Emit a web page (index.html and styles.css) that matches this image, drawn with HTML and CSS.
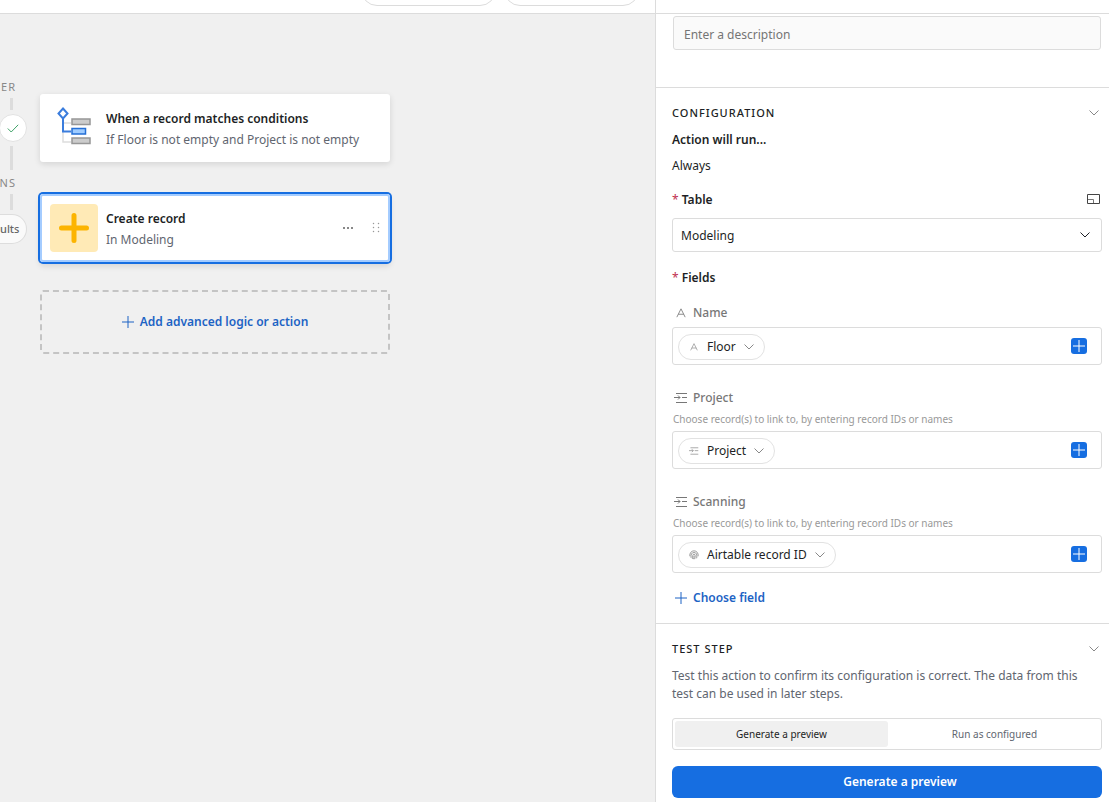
FILE: index.html
```html
<!DOCTYPE html>
<html lang="en">
<head>
    <meta charset="UTF-8">
    <meta name="viewport" content="width=device-width, initial-scale=1.0">
    <title>Automation Editor</title>
    <link rel="stylesheet" href="styles.css">
</head>
<body>
    <!-- Shared icons -->
    <svg class="sprite" aria-hidden="true">
        <symbol id="chevron" viewBox="0 0 10 6"><path d="M.5 .5 5 5 9.500 .5"/></symbol>
        <symbol id="plus" viewBox="0 0 12 12"><path d="M6 0v12M0 6h12"/></symbol>
        <symbol id="text" viewBox="0 0 12 12"><path d="M1 11 6 1l5 10M2.700 7.500h6.600"/></symbol>
        <symbol id="link" viewBox="0 0 14 10"><path d="M2 .5h11M8 4.500h5M2 9.500h11M0 4.500h6M4 2.500l2 2-2 2"/></symbol>
        <symbol id="print" viewBox="0 0 12 12"><path d="M1 7.500C.5 3.500 3 1 6 1s5.500 2.500 5 6.500M2.500 9.500C2 5.500 3 3 6 3s4 2.500 3.200 7M4 10.700C4.700 8 4 5 6 5s1.500 3 .8 6M6 7c0 1.500 0 2.500-.6 4"/></symbol>
    </svg>

    <div class="app">
        <main class="workspace">
            <header class="topbar">
                <button class="top-button" aria-label="Previous"></button>
                <button class="top-button" aria-label="Next"></button>
            </header>
            <div class="canvas">
                <div class="rail">
                    <span class="rail-label">ER</span>
                    <span class="line"></span>
                    <span class="check">
                        <svg width="12" height="9" viewBox="0 0 12 9"><path d="M.8 4.500 4.200 8 11.200 .8"/></svg>
                    </span>
                    <span class="line line-long"></span>
                    <span class="rail-label">NS</span>
                    <span class="line line-end"></span>
                    <button class="results">ults</button>
                </div>
                <div class="steps">
                    <section class="card">
                        <div class="card-icon">
                            <svg width="48" height="48" viewBox="0 0 48 48" fill="none">
                                <path d="M13 17.500v20.500h8M13 19h8" stroke="#ddd" stroke-width="1.500"/>
                                <path d="M13 13v14.500h8" stroke="#3b7ddd" stroke-width="2"/>
                                <path d="M13 4.500 17.500 9.500 13 14.500 8.500 9.500z" fill="#fff" stroke="#3b7ddd" stroke-width="2"/>
                                <path d="M22 15h18v5.500H22zM22 34h18v5.500H22z" fill="#ccc" stroke="#979797" stroke-width="1.500"/>
                                <path d="M22 24.500h13.500V30H22z" fill="#9fccff" stroke="#246fd6" stroke-width="1.500"/>
                            </svg>
                        </div>
                        <div class="card-text">
                            <h2>When a record matches conditions</h2>
                            <p>If Floor is not empty and Project is not empty</p>
                        </div>
                    </section>
                    <section class="card selected">
                        <div class="card-icon yellow">
                            <svg width="30" height="30" viewBox="0 0 30 30"><path d="M15 2.500v25M2.500 15h25" stroke="#fcb400" stroke-width="5" stroke-linecap="round"/></svg>
                        </div>
                        <div class="card-text">
                            <h2>Create record</h2>
                            <p>In Modeling</p>
                        </div>
                        <button class="icon-button" aria-label="More options">
                            <svg width="12" height="4" viewBox="0 0 12 4" fill="#888"><rect x="1" y="1" width="2" height="2"/><rect x="5" y="1" width="2" height="2"/><rect x="9" y="1" width="2" height="2"/></svg>
                        </button>
                        <button class="icon-button" aria-label="Drag to reorder">
                            <svg width="8" height="12" viewBox="0 0 8 12" fill="#999"><path d="M1 1h1v1H1zM6 1h1v1H6zM1 5h1v1H1zM6 5h1v1H6zM1 9h1v1H1zM6 9h1v1H6z" stroke="#999" stroke-width=".3"/></svg>
                        </button>
                    </section>
                    <button class="add-step">
                        <svg class="icon" width="12" height="12"><use href="#plus"/></svg>
                        Add advanced logic or action
                    </button>
                </div>
            </div>
        </main>

        <aside class="panel">
            <div class="panel-top"></div>
            <div class="description">
                <input type="text" placeholder="Enter a description" aria-label="Description">
            </div>

            <section class="section">
                <div class="section-title">
                    <h3>Configuration</h3>
                    <button class="collapse" aria-label="Collapse configuration"><svg class="icon" width="10" height="6"><use href="#chevron"/></svg></button>
                </div>
                <p class="strong">Action will run...</p>
                <p class="condition">Always</p>
                <div class="label-row">
                    <label class="strong" for="table"><span class="required">*</span> Table</label>
                    <button class="expand" aria-label="Expand table">
                        <svg width="13" height="10" viewBox="0 0 13 10" fill="none"><path d="M.5 .5h12v9H.5z" stroke="#444"/><path d="M1 5.500h5.500V9" stroke="#777"/></svg>
                    </button>
                </div>
                <div class="select">
                    <select id="table">
                        <option>Modeling</option>
                    </select>
                    <svg class="icon" width="10" height="6"><use href="#chevron"/></svg>
                </div>
                <p class="strong fields-title"><span class="required">*</span> Fields</p>

                <div class="field">
                    <div class="field-name"><svg class="icon" width="14" height="10"><use href="#text"/></svg>Name</div>
                    <div class="token-box">
                        <button class="token">
                            <svg class="icon" width="10" height="8"><use href="#text"/></svg>
                            Floor
                            <svg class="icon" width="10" height="6"><use href="#chevron"/></svg>
                        </button>
                        <button class="insert" aria-label="Insert value in Name"><svg class="icon" width="12" height="12"><use href="#plus"/></svg></button>
                    </div>
                </div>
                <div class="field">
                    <div class="field-name"><svg class="icon" width="14" height="10"><use href="#link"/></svg>Project</div>
                    <p class="hint">Choose record(s) to link to, by entering record IDs or names</p>
                    <div class="token-box">
                        <button class="token">
                            <svg class="icon" width="10" height="8"><use href="#link"/></svg>
                            Project
                            <svg class="icon" width="10" height="6"><use href="#chevron"/></svg>
                        </button>
                        <button class="insert" aria-label="Insert value in Project"><svg class="icon" width="12" height="12"><use href="#plus"/></svg></button>
                    </div>
                </div>
                <div class="field">
                    <div class="field-name"><svg class="icon" width="14" height="10"><use href="#link"/></svg>Scanning</div>
                    <p class="hint">Choose record(s) to link to, by entering record IDs or names</p>
                    <div class="token-box">
                        <button class="token">
                            <svg class="icon" width="10" height="10"><use href="#print"/></svg>
                            Airtable record ID
                            <svg class="icon" width="10" height="6"><use href="#chevron"/></svg>
                        </button>
                        <button class="insert" aria-label="Insert value in Scanning"><svg class="icon" width="12" height="12"><use href="#plus"/></svg></button>
                    </div>
                </div>
                <button class="choose-field"><svg class="icon" width="12" height="12"><use href="#plus"/></svg>Choose field</button>
            </section>

            <section class="section">
                <div class="section-title">
                    <h3>Test step</h3>
                    <button class="collapse" aria-label="Collapse test step"><svg class="icon" width="10" height="6"><use href="#chevron"/></svg></button>
                </div>
                <p class="muted">Test this action to confirm its configuration is correct. The data from this test can be used in later steps.</p>
                <div class="segments">
                    <button class="active">Generate a preview</button>
                    <button>Run as configured</button>
                </div>
                <button class="primary">Generate a preview</button>
            </section>
        </aside>
    </div>
</body>
</html>
```

FILE: styles.css
```css
* {
    box-sizing: border-box;
}
body {
    margin: 0;
    font-family: "Noto Sans", "Open Sans", sans-serif;
    font-size: 12px;
    line-height: 18px;
    color: #1d1f25;
    background: #fff;
}
h2, h3, p {
    margin: 0;
    font-size: 12px;
}
button, input, select {
    font: inherit;
    color: inherit;
}
button {
    padding: 0;
    border: none;
    background: none;
    cursor: pointer;
}
svg {
    display: block;
    flex: none;
}
.sprite {
    position: absolute;
    width: 0;
    height: 0;
}
.icon {
    fill: none;
    stroke: currentColor;
}
.app {
    display: flex;
    height: 100vh;
    overflow: hidden;
}

/* Workspace */
.workspace {
    flex: 1;
    min-width: 0;
    display: flex;
    flex-direction: column;
}
.topbar {
    display: flex;
    align-items: flex-end;
    justify-content: flex-end;
    gap: 8px;
    height: 14px;
    padding: 0 16px 7px 0;
    border-bottom: 1px solid #dcdcdc;
    overflow: hidden;
}
.top-button {
    flex: none;
    width: 135px;
    height: 32px;
    border: 1px solid #dcdcdc;
    border-radius: 16px;
}
.canvas {
    flex: 1;
    display: flex;
    gap: 12px;
    background: #f0f0f0;
}
.rail {
    display: flex;
    flex-direction: column;
    align-items: flex-end;
    width: 28px;
    padding-top: 64px;
}
.rail-label {
    padding-right: 12px;
    font-size: 11px;
    letter-spacing: 1px;
    color: #888;
}
.line {
    width: 3px;
    height: 12px;
    margin: 2px 15px 4px 0;
    background: #dcdcdc;
}
.line-long {
    height: 24px;
    margin-top: 4px;
}
.line-end {
    height: 16px;
}
.check {
    display: flex;
    align-items: center;
    justify-content: center;
    width: 28px;
    height: 28px;
    margin-right: 1px;
    border: 1px solid #e2e2e2;
    border-radius: 50%;
    background: #fff;
}
.check svg {
    fill: none;
    stroke: #3fa268;
}
.results {
    width: 27px;
    height: 30px;
    margin-right: 1px;
    border: 1px solid #ddd;
    border-left: none;
    border-radius: 0 15px 15px 0;
    background: #fafafa;
    text-align: left;
    font-weight: 500;
    font-size: 11px;
    color: #666;
}
.steps {
    width: 350px;
    padding-top: 80px;
}
.card {
    display: flex;
    align-items: center;
    gap: 8px;
    height: 68px;
    margin-bottom: 32px;
    padding: 0 10px;
    border-radius: 3px;
    background: #fff;
    box-shadow: 0 2px 6px rgba(0, 0, 0, 0.12);
}
.selected {
    margin-bottom: 28px;
    box-shadow: inset 0 0 0 2px #a4ccff, 0 0 0 2px #166ee1, 0 4px 6px rgba(0, 0, 0, 0.12);
}
.card-icon {
    display: flex;
    align-items: center;
    justify-content: center;
    width: 48px;
    height: 48px;
}
.yellow {
    border-radius: 4px;
    background: #ffeab6;
}
.card-text {
    flex: 1;
    padding-top: 2px;
    line-height: 21px;
    white-space: nowrap;
}
.card-text h2 {
    font-weight: 600;
}
.card-text p {
    color: #616670;
}
.icon-button {
    display: flex;
    align-items: center;
    justify-content: center;
    width: 32px;
    height: 20px;
}
.icon-button:last-child {
    width: 8px;
}
.add-step {
    display: flex;
    align-items: center;
    justify-content: center;
    gap: 6px;
    width: 100%;
    height: 64px;
    border: 2px dashed #c4c4c4;
    border-radius: 3px;
    font-weight: 600;
    color: #1d63c4;
}

/* Side panel */
.panel {
    flex: none;
    width: 41%;
    max-width: 454px;
    border-left: 1px solid #dcdcdc;
    background: #fff;
    overflow: hidden;
}
.panel-top {
    height: 14px;
    border-bottom: 1px solid #dcdcdc;
}
.description {
    padding: 2px 8px 37px 17px;
}
.description input {
    display: block;
    width: 100%;
    height: 34px;
    padding: 2px 10px 0;
    border: 1px solid #dcdcdc;
    border-radius: 3px;
    background: #fafafa;
}
.description input::placeholder {
    color: #757575;
}
.section {
    padding: 16px 7px 16px 16px;
    border-top: 1px solid #dcdcdc;
}
.section-title, .label-row {
    display: flex;
    align-items: center;
    justify-content: space-between;
}
.section-title {
    margin-bottom: 9px;
}
.section-title h3 {
    font-size: 11px;
    font-weight: 500;
    letter-spacing: 1px;
    text-transform: uppercase;
}
.collapse {
    padding: 0 3px;
    color: #888;
}
.strong {
    font-weight: 600;
}
.required {
    font-weight: 400;
    color: #c0304f;
}
.condition {
    margin: 8px 0 16px;
}
.expand {
    padding: 0 2px 2px 0;
}
.select {
    position: relative;
    margin: 9px 0 17px;
}
.select select {
    display: block;
    width: 100%;
    height: 34px;
    padding: 2px 8px 0;
    border: 1px solid #dcdcdc;
    border-radius: 3px;
    background: #fff;
    appearance: none;
}
.select .icon {
    position: absolute;
    top: 14px;
    right: 12px;
    pointer-events: none;
}
.fields-title {
    margin-bottom: 17px;
}
.field {
    margin-bottom: 24px;
}
.field-name {
    display: flex;
    align-items: center;
    gap: 5px;
    margin: 0 0 5px 2px;
    color: #777;
    font-weight: 500;
}
.hint {
    margin: -1px 0 4px 1px;
    font-size: 10px;
    line-height: 16px;
    color: #999;
}
.token-box {
    display: flex;
    align-items: center;
    justify-content: space-between;
    height: 38px;
    padding: 0 14px 0 5px;
    border: 1px solid #dcdcdc;
    border-radius: 3px;
}
.token {
    display: flex;
    align-items: center;
    gap: 8px;
    height: 26px;
    margin-top: 2px;
    padding: 0 10px;
    border: 1px solid #e2e2e2;
    border-radius: 13px;
}
.token .icon {
    color: #888;
}
.insert {
    display: flex;
    align-items: center;
    justify-content: center;
    width: 16px;
    height: 16px;
    border-radius: 3px;
    background: #166ee1;
    color: #fff;
}
.choose-field {
    display: flex;
    align-items: center;
    gap: 6px;
    margin: -8px 0 0 3px;
    font-weight: 600;
    color: #1d63c4;
}
.muted {
    padding-right: 8px;
    color: #616670;
}
.segments {
    display: flex;
    height: 32px;
    margin: 15px 0 16px;
    padding: 2px 0 2px 2px;
    border: 1px solid #dcdcdc;
    border-radius: 3px;
}
.segments button {
    flex: 1;
    border-radius: 3px;
    font-size: 10px;
    color: #616670;
}
.segments .active {
    background: #f0f0f0;
    color: #1d1f25;
}
.primary {
    width: 100%;
    height: 32px;
    padding-left: 26px;
    border-radius: 6px;
    background: #166ee1;
    color: #fff;
    font-weight: 600;
}
```
